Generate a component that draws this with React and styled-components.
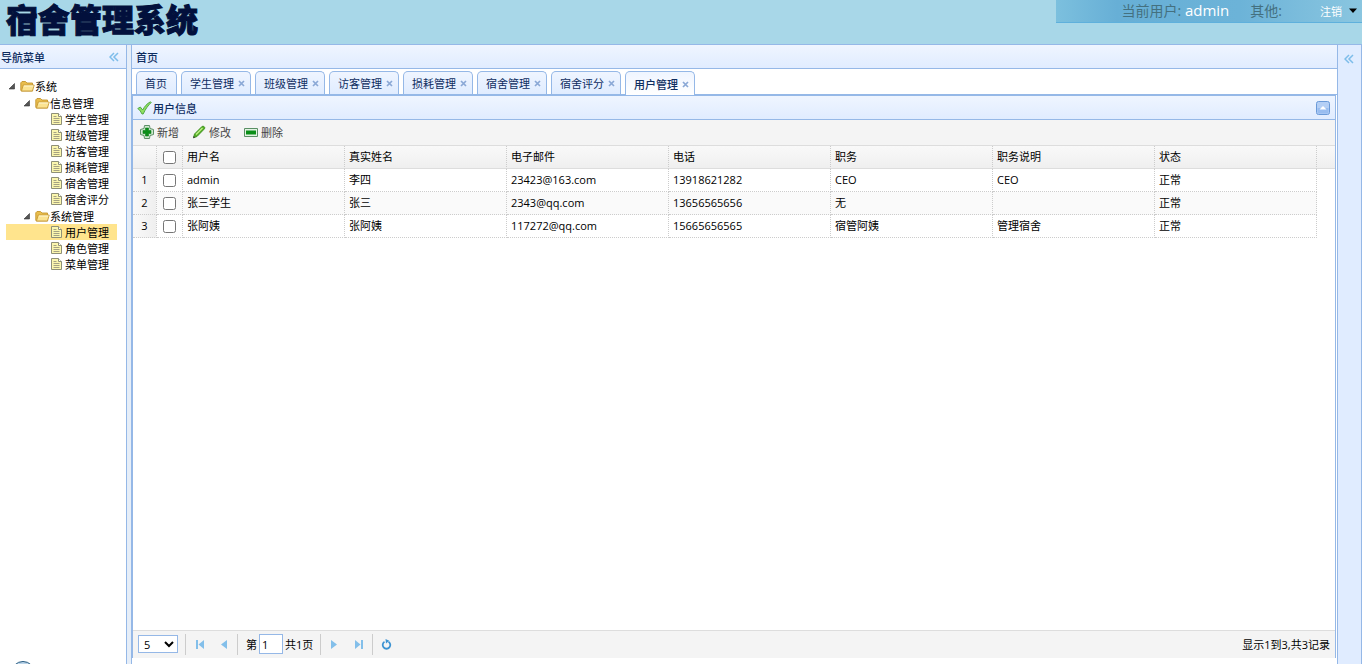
import React, { useState } from 'react'
import styled, { createGlobalStyle } from 'styled-components'

const GlobalStyle = createGlobalStyle`
  * {
    box-sizing: border-box;
  }
  html, body, #root {
    height: 100%;
    margin: 0;
  }
  body, button, input, select {
    font-family: "Open Sans", "Noto Sans CJK SC", sans-serif;
    font-size: 11px;
  }
  body {
    overflow: hidden;
    color: #000;
  }
  button {
    padding: 0;
    border: 0;
    background: none;
    color: inherit;
    cursor: pointer;
  }
  ul {
    list-style: none;
    margin: 0;
    padding: 0;
  }
  svg {
    display: block;
    flex: none;
  }
`;

const groups = [
    { name: '信息管理', items: ['学生管理', '班级管理', '访客管理', '损耗管理', '宿舍管理', '宿舍评分'] },
    { name: '系统管理', items: ['用户管理', '角色管理', '菜单管理'] },
];

const tabs = ['首页', '学生管理', '班级管理', '访客管理', '损耗管理', '宿舍管理', '宿舍评分', '用户管理'];

const columns = ['用户名', '真实姓名', '电子邮件', '电话', '职务', '职务说明', '状态'];

const users = [
    ['admin', '李四', '23423@163.com', '13918621282', 'CEO', 'CEO', '正常'],
    ['张三学生', '张三', '2343@qq.com', '13656565656', '无', '', '正常'],
    ['张阿姨', '张阿姨', '117272@qq.com', '15665656565', '宿管阿姨', '管理宿舍', '正常'],
];

const CollapseIcon = () => (
    <svg width="10" height="10" viewBox="0 0 10 10" fill="none" stroke="#7dbdea" strokeWidth="1.5">
        <path d="M5 1L1 5l4 4M9 1L5 5l4 4" />
    </svg>
);

const ExpandedIcon = () => (
    <svg width="14" height="16" viewBox="0 0 14 16">
        <path d="M8.500 5.500v5.500H3z" fill="#555" stroke="#333" strokeWidth=".6" />
    </svg>
);

const FolderIcon = () => (
    <svg width="15" height="16" viewBox="0 0 15 16">
        <path d="M.8 12.500V4.800L2 3.500h3.500L7 5h5.500v8h-11z" fill="#e9bd4c" stroke="#c4952e" strokeWidth=".9" />
        <path d="M1.500 13L3.200 7h11l-1.700 6z" fill="#fbe391" stroke="#c79a38" strokeWidth=".9" />
        <path d="M4 8h9.300" stroke="#fff8d4" />
    </svg>
);

const FileIcon = () => (
    <svg width="15" height="16" viewBox="0 0 15 16">
        <path d="M1.500 2.500h7l3 3v8h-10z" fill="#fbf6ae" stroke="#8f9078" />
        <path d="M8.500 2.500v3h3" fill="#fff" stroke="#8f9078" />
        <path d="M3.500 5.500h3M3.500 7.500h6M3.500 9.500h6M3.500 11.500h6" stroke="#a5a283" />
    </svg>
);

const OkIcon = () => (
    <svg width="15" height="14" viewBox="0 0 15 14">
        <path d="M.8 7.500l2.500-1.500 2.400 3C7.500 5.500 10 2.500 13.500.8l.7.700C11 4.500 8.500 8 6.200 13H5C4 10.700 2.700 9 .8 7.500z" fill="#8fe063" stroke="#4aa23e" strokeWidth=".9" />
    </svg>
);

const AddIcon = () => (
    <svg width="14" height="14" viewBox="0 0 14 14">
        <path d="M4.500.5h5l.5 3 3.500 1v5l-3.500 1-.5 3h-5l-.5-3-3.500-1v-5l3.500-1z" fill="#cfe8cf" stroke="#5d8f66" />
        <path d="M5.500 3h3v2.500H11v3H8.500V11h-3V8.500H3v-3h2.500z" fill="#0b8f18" stroke="#0a7a18" strokeWidth=".6" />
    </svg>
);

const EditIcon = () => (
    <svg width="14" height="14" viewBox="0 0 14 14">
        <path d="M1.500 12.700l1-3.700 7.700-7.700h1.500l1 1-.2 1.500L5 11.500z" fill="#56b324" stroke="#3a8a20" strokeWidth=".9" />
        <path d="M4 9.500L10.500 3" stroke="#c5ee8e" strokeWidth="1.300" />
        <path d="M1 13.300l.7-2.300 1.600 1.500z" fill="#444" />
    </svg>
);

const RemoveIcon = () => (
    <svg width="14" height="14" viewBox="0 0 14 14">
        <path d="M.5 3.500h13v8H.5z" fill="#e3f3e3" stroke="#5a8f64" />
        <path d="M2 5.500h10v4H2z" fill="#0b8f18" />
    </svg>
);

const PanelUpIcon = () => (
    <svg width="14" height="14" viewBox="0 0 14 14">
        <rect x=".5" y=".5" width="13" height="13" rx="2" fill="#b4cff5" stroke="#6a9ad8" />
        <path d="M1.500 7h11v5.500h-11z" fill="#98bdf0" />
        <path d="M3.500 8.500L7 5l3.500 3.500z" fill="#fff" />
    </svg>
);

const pagerPaths = {
    first: 'M2 1h2v9H2zM10 1v9L4.500 5.500z',
    prev: 'M8 1v9L2 5.500z',
    next: 'M2 1v9l6-4.500z',
    last: 'M1 1v9l5.500-4.500zM7 1h2v9H7z',
};

const PagerIcon = ({ name }) => (
    <svg width="11" height="11" viewBox="0 0 11 11">
        <path d={pagerPaths[name]} fill="#83bfea" />
    </svg>
);

const RefreshIcon = () => (
    <svg width="11" height="11" viewBox="0 0 11 11">
        <path d="M3.500 2.700a3.800 3.800 0 1 0 4 0" fill="none" stroke="#3c93d2" strokeWidth="1.800" />
        <path d="M4.500 0l3.800 1.800L5 4.500z" fill="#3c93d2" />
    </svg>
);

const App = () => {
    const [page, setPage] = useState('1');
    const [active, setActive] = useState('用户管理');

    return (
        <Page>
            <GlobalStyle />
            <Header>
                <Logo>宿舍管理系统</Logo>
                <UserBar>
                    <span>当前用户: <b>admin</b></span>
                    <span>其他:</span>
                    <LogoutButton type="button">
                        注销
                        <svg width="8" height="5" viewBox="0 0 8 5"><path d="M0 .5h8L4 5z" fill="#000" /></svg>
                    </LogoutButton>
                </UserBar>
            </Header>
            <Main>
                <West>
                    <RegionTitle>
                        导航菜单
                        <button type="button" aria-label="collapse"><CollapseIcon /></button>
                    </RegionTitle>
                    <Tree>
                        <TreeRow $folder><ExpandedIcon /><FolderIcon /><span>系统</span></TreeRow>
                        {groups.map((group) => (
                            <React.Fragment key={group.name}>
                                <TreeRow $folder $indent={15}><ExpandedIcon /><FolderIcon /><span>{group.name}</span></TreeRow>
                                {group.items.map((item) => (
                                    <TreeRow key={item} $indent={44} $selected={item === active} onClick={() => setActive(item)}>
                                        <FileIcon /><span>{item}</span>
                                    </TreeRow>
                                ))}
                            </React.Fragment>
                        ))}
                    </Tree>
                    <Badge />
                </West>
                <Center>
                    <RegionTitle $inset>首页</RegionTitle>
                    <TabList>
                        {tabs.map((tab) => (
                            <Tab key={tab} $active={tab === active}>
                                <button type="button" onClick={() => setActive(tab)}>{tab}</button>
                                {tab !== '首页' && (
                                    <CloseButton type="button" aria-label="close">
                                        <svg width="7" height="7" viewBox="0 0 7 7"><path d="M1 1l5 5M6 1L1 6" stroke="#8aa8d6" strokeWidth="1.700" /></svg>
                                    </CloseButton>
                                )}
                            </Tab>
                        ))}
                    </TabList>
                    <Panel>
                        <PanelTitle>
                            <OkIcon />
                            <span>用户信息</span>
                            <button type="button" aria-label="collapse"><PanelUpIcon /></button>
                        </PanelTitle>
                        <Toolbar>
                            <ToolButton type="button"><AddIcon />新增</ToolButton>
                            <ToolButton type="button"><EditIcon />修改</ToolButton>
                            <ToolButton type="button"><RemoveIcon />删除</ToolButton>
                        </Toolbar>
                        <GridBody>
                            <Grid>
                                <colgroup>
                                    <col width="24" />
                                    <col width="26" />
                                    {columns.map((name) => <col key={name} />)}
                                    <col width="18" />
                                </colgroup>
                                <thead>
                                    <tr>
                                        <th />
                                        <CheckHead><input type="checkbox" aria-label="all" /></CheckHead>
                                        {columns.map((name) => <th key={name}>{name}</th>)}
                                        <th />
                                    </tr>
                                </thead>
                                <tbody>
                                    {users.map((user, i) => (
                                        <tr key={user[0]}>
                                            <NumberCell>{i + 1}</NumberCell>
                                            <CheckCell><input type="checkbox" aria-label={user[0]} /></CheckCell>
                                            {user.map((value, j) => <td key={columns[j]}>{value}</td>)}
                                        </tr>
                                    ))}
                                </tbody>
                            </Grid>
                        </GridBody>
                        <Pager>
                            <PageSize aria-label="page size" defaultValue="5">
                                <option>5</option>
                                <option>10</option>
                                <option>20</option>
                            </PageSize>
                            <Separator />
                            <PagerButton type="button" aria-label="first"><PagerIcon name="first" /></PagerButton>
                            <PagerButton type="button" aria-label="previous"><PagerIcon name="prev" /></PagerButton>
                            <Separator />
                            <PageLabel>
                                第
                                <input value={page} onChange={(e) => setPage(e.target.value)} />
                                共1页
                            </PageLabel>
                            <Separator />
                            <PagerButton type="button" aria-label="next"><PagerIcon name="next" /></PagerButton>
                            <PagerButton type="button" aria-label="last"><PagerIcon name="last" /></PagerButton>
                            <Separator />
                            <PagerButton type="button" aria-label="refresh"><RefreshIcon /></PagerButton>
                            <PageInfo>显示1到3,共3记录</PageInfo>
                        </Pager>
                    </Panel>
                </Center>
                <East>
                    <button type="button" aria-label="expand"><CollapseIcon /></button>
                </East>
            </Main>
        </Page>
    );
}

const Page = styled.div`
  display: flex;
  flex-direction: column;
  height: 100%;
`;

const Header = styled.header`
  display: flex;
  justify-content: space-between;
  align-items: flex-start;
  height: 44px;
  flex: none;
  background: #a8d7e8;
`;

const Logo = styled.h1`
  margin: 0;
  padding-left: 6px;
  font-family: "Noto Sans CJK SC", sans-serif;
  font-size: 32px;
  line-height: 36px;
  font-weight: 900;
  color: #02103c;
  -webkit-text-stroke: 1px #02103c;
`;

const UserBar = styled.div`
  display: flex;
  align-items: center;
  justify-content: flex-end;
  gap: 21px;
  width: 306px;
  height: 23px;
  padding: 0 5px 1px 0;
  border-bottom: 1px solid #5fb0dc;
  background: linear-gradient(90deg, #7cc0de, #67afd6 20%, #6cb3d8 60%, #8ac6e0);
  font-size: 14px;
  line-height: 20px;
  color: #44707f;
  b {
    font-size: 15px;
    font-weight: 400;
    color: #fff;
  }
`;

const LogoutButton = styled.button`
  display: flex;
  align-items: center;
  gap: 7px;
  padding-left: 17px;
  color: #fff;
`;

const Main = styled.div`
  display: flex;
  flex: 1;
  min-height: 0;
  border-top: 1px solid #95b8e7;
  background: #e6eef8;
`;

const West = styled.aside`
  position: relative;
  width: 127px;
  flex: none;
  overflow: hidden;
  border-right: 1px solid #95b8e7;
  background: #fff;
`;

const RegionTitle = styled.div`
  display: flex;
  align-items: center;
  justify-content: space-between;
  height: 24px;
  padding: 0 7px 0 ${({ $inset }) => ($inset ? '4px' : '1px')};
  border-bottom: 1px solid #95b8e7;
  background: linear-gradient(#eff5ff, #e0ecff);
  font-weight: 500;
  color: #0e2d5f;
`;

const Tree = styled.ul`
  padding: 8px 9px 0 6px;
`;

const TreeRow = styled.li`
  display: flex;
  align-items: center;
  height: ${({ $folder }) => ($folder ? '17px' : '16px')};
  padding-left: ${({ $indent }) => $indent || 0}px;
  background: ${({ $selected }) => ($selected ? '#ffe48d' : 'transparent')};
  white-space: nowrap;
  cursor: pointer;
`;

const Badge = styled.div`
  position: absolute;
  left: 11px;
  bottom: -21px;
  width: 24px;
  height: 24px;
  border: 1px solid #24597f;
  border-radius: 50%;
  background: #bcd5ea;
`;

const Center = styled.main`
  display: flex;
  flex-direction: column;
  flex: 1;
  min-width: 0;
  margin-left: 4px;
  border-left: 1px solid #95b8e7;
  background: #fff;
`;

const TabList = styled.ul`
  display: flex;
  align-items: flex-end;
  gap: 4px;
  height: 26px;
  padding-left: 4px;
  border-bottom: 1px solid #95b8e7;
`;

const Tab = styled.li`
  display: flex;
  align-items: center;
  gap: 4px;
  height: ${({ $active }) => ($active ? '24px' : '23px')};
  margin-bottom: ${({ $active }) => ($active ? '-1px' : '0')};
  padding: 0 5px 0 8px;
  border: 1px solid #95b8e7;
  border-bottom: 0;
  border-radius: 5px 5px 0 0;
  background: ${({ $active }) => ($active ? 'linear-gradient(#eff5ff, #fff)' : 'linear-gradient(#eff5ff, #e0ecff)')};
  font-weight: ${({ $active }) => ($active ? 500 : 400)};
  color: #0e2d5f;
  z-index: 1;
  &:first-child {
    padding-right: 9px;
  }
  button {
    font-weight: inherit;
  }
`;

const CloseButton = styled.button`
  padding-top: 1px;
`;

const Panel = styled.section`
  display: flex;
  flex-direction: column;
  flex: 1;
  min-height: 0;
  margin: 0 1px 6px 0;
  border: 1px solid #95b8e7;
  border-bottom: 0;
`;

const PanelTitle = styled.div`
  display: flex;
  align-items: center;
  gap: 1px;
  height: 24px;
  padding: 0 5px 0 4px;
  border-bottom: 1px solid #95b8e7;
  background: linear-gradient(#eff5ff, #e0ecff);
  font-weight: 500;
  color: #0e2d5f;
  button {
    margin-left: auto;
  }
`;

const Toolbar = styled.div`
  display: flex;
  align-items: center;
  gap: 13px;
  height: 26px;
  padding: 0 0 1px 7px;
  border-bottom: 1px solid #ddd;
  background: #f4f4f4;
`;

const ToolButton = styled.button`
  display: flex;
  align-items: center;
  gap: 3px;
  color: #444;
`;

const GridBody = styled.div`
  flex: 1;
  min-height: 0;
  overflow: hidden;
  background: #fff;
`;

const Grid = styled.table`
  width: 100%;
  table-layout: fixed;
  border-collapse: separate;
  border-spacing: 0;
  th, td {
    height: 23px;
    padding: 0 4px;
    border-right: 1px dotted #ccc;
    border-bottom: 1px dotted #ccc;
    text-align: left;
    font-weight: 400;
    line-height: 16px;
    overflow: hidden;
    white-space: nowrap;
  }
  th {
    border-bottom: 1px solid #ddd;
    background: linear-gradient(#f9f9f9, #efefef);
  }
  th:last-child {
    border-right: 0;
  }
  tbody tr:nth-child(even) td {
    background-color: #fafafa;
  }
  input {
    display: block;
    width: 13px;
    height: 13px;
    margin: 0 auto;
  }
`;

const CheckHead = styled.th`
  && {
    padding: 0;
  }
`;

const CheckCell = styled.td`
  && {
    padding: 0;
  }
`;

const NumberCell = styled.td`
  && {
    padding: 0;
    text-align: center;
    background: linear-gradient(90deg, #f9f9f9, #efefef);
  }
`;

const Pager = styled.div`
  display: flex;
  align-items: center;
  height: 28px;
  flex: none;
  padding: 0 5px 1px;
  border-top: 1px solid #ddd;
  background: #f4f4f4;
`;

const PageSize = styled.select`
  width: 40px;
  height: 18px;
  margin-right: 7px;
  padding: 0 0 0 1px;
  border: 1px solid #95b8e7;
  background: #fff;
`;

const Separator = styled.span`
  width: 1px;
  height: 21px;
  margin-right: 1px;
  background: #ccc;
`;

const PagerButton = styled.button`
  display: grid;
  place-items: center;
  width: 25px;
  height: 22px;
`;

const PageLabel = styled.label`
  display: flex;
  align-items: center;
  gap: 2px;
  padding: 0 7px;
  input {
    width: 24px;
    height: 20px;
    padding: 0 2px;
    border: 1px solid #95b8e7;
    background: #fff;
  }
`;

const PageInfo = styled.span`
  margin-left: auto;
`;

const East = styled.aside`
  width: 25px;
  flex: none;
  padding: 7px 6px;
  border: 1px solid #95b8e7;
  border-width: 0 1px;
  background: #e0ecff;
`;

export default App;
